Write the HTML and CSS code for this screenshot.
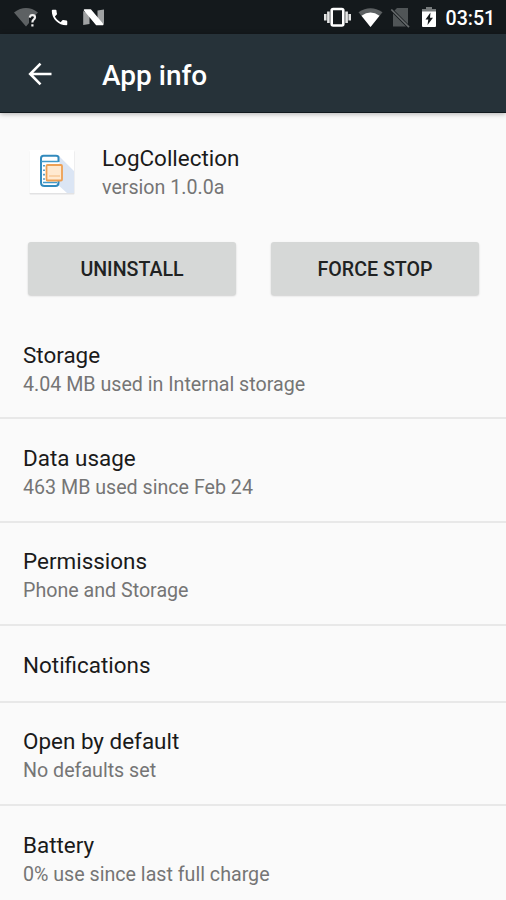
FILE: index.html
```html
<!DOCTYPE html>
<html lang="en">
<head>
<meta charset="utf-8">
<title>App info</title>
<link rel="stylesheet" href="styles.css">
</head>
<body>
<div class="screen">
  <div class="status">
    <svg class="status-icons" width="110" height="34" viewBox="0 0 110 34">
      <path d="M14 12.400Q26 3.600 38 12.400L35.500 15H29V23L26 26.500Z" fill="#5d6163"/>
      <path d="M29.800 17.600Q30 15.200 32.500 15.200Q35 15.200 35 17.300Q35 18.600 33.600 19.600Q32.400 20.500 32.400 22.500M32.400 24.200V26.400" fill="none" stroke="#eee" stroke-width="2.200"/>
      <path transform="translate(49.200 7.200) scale(.86)" d="M6.620 10.790c1.440 2.830 3.760 5.140 6.590 6.590l2.200-2.200c.27-.27.67-.36 1.020-.24 1.120.37 2.330.57 3.570.57.55 0 1 .45 1 1V20c0 .55-.45 1-1 1-9.390 0-17-7.610-17-17 0-.55.45-1 1-1h3.500c.55 0 1 .45 1 1 0 1.250.2 2.450.57 3.570.11.35.03.74-.25 1.020l-2.200 2.200z" fill="#fff"/>
      <path d="M83.200 11L89.500 14V24L83.200 25ZM97.500 10.500L104 9.500V24L97.500 22Z" fill="#a0a2a3"/>
      <path d="M84.500 10H90.500L102.800 24.500H96.500Z" fill="#fff" stroke="#fff" stroke-width="1.500" stroke-linejoin="round"/>
    </svg>
    <div class="status-right">
      <svg width="114" height="34" viewBox="324 0 114 34">
        <rect x="331.700" y="9" width="11.600" height="16.500" rx="1.500" fill="none" stroke="#fff" stroke-width="2.600"/>
        <path d="M328.400 11.500V23M325.300 14V20.500M346.600 11.500V23M349.700 14V20.500" stroke="#e4e5e5" stroke-width="2.600"/>
        <path d="M358.500 12.200Q370.500 4.200 382.500 12.200L370.500 27Z" fill="#5d6163"/>
        <path d="M361.500 15.800Q370.500 9.300 379.500 15.800L370.500 27Z" fill="#fff"/>
        <path d="M397 8H408V24L394.500 10.500ZM393 13.500L406 26.500H393Z" fill="#505557"/>
        <path d="M391.300 9.500L409 27.200" stroke="#666a6c" stroke-width="1.700"/>
        <path d="M426 7H432V9H436V12H422V9H426Z" fill="#777b7c"/>
        <path d="M422 11.500H436V26Q436 27 435 27H423Q422 27 422 26Z" fill="#fff"/>
        <path d="M430.500 12.500L425.500 19.500H428.300L427.500 25L433 17.700H430Z" fill="#14191c"/>
      </svg>
      <span class="clock">03:51</span>
    </div>
  </div>
  <header class="toolbar">
    <svg width="24" height="24" viewBox="0 0 24 24" fill="none" stroke="#fff" stroke-width="2.600"><path d="M23.500 12H3M12.500 1.700L2.200 12L12.500 22.300"/></svg>
    <h1>App info</h1>
  </header>
  <main>
    <section class="app">
      <svg width="54" height="54" viewBox="25 145 54 54">
        <rect x="29.500" y="151" width="45" height="43.500" rx="1" fill="#e2e2e3"/>
        <rect x="29.500" y="150" width="44.500" height="43" fill="#fff"/>
        <path d="M59 156L74 171V193H67L57 184L60 175Z" fill="#dbe5f4"/>
        <path d="M58.500 162V157.500Q58.500 155.800 56 155.800H43.500Q41 155.800 41 158.500V182.500Q41 186 44.500 186H55.500Q58.500 186 58.500 182.500V181" fill="#fff" stroke="#328abd" stroke-width="2"/>
        <path d="M41 161.500H58.500M43 182.500H57" stroke="#429aca" stroke-width="1.300"/>
        <path d="M43 165.800H45M43 170.200H45M43 174.600H45M43 179H45" stroke="#5a9fc6" stroke-width="1.600"/>
        <rect x="46.500" y="165" width="15.500" height="15.500" rx="1" fill="#ffe9d0" stroke="#eea054" stroke-width="1.800"/>
        <path d="M49 176H60" stroke="#f6c18b" stroke-width="1.200"/>
      </svg>
      <div>
        <div class="title">LogCollection</div>
        <div class="summary">version 1.0.0a</div>
      </div>
    </section>
    <div class="actions">
      <button>UNINSTALL</button>
      <button>FORCE STOP</button>
    </div>
    <div class="row"><div class="title">Storage</div><div class="summary">4.04 MB used in Internal storage</div></div>
    <div class="row"><div class="title">Data usage</div><div class="summary">463 MB used since Feb 24</div></div>
    <div class="row"><div class="title">Permissions</div><div class="summary">Phone and Storage</div></div>
    <div class="row single"><div class="title">Notifications</div></div>
    <div class="row"><div class="title">Open by default</div><div class="summary">No defaults set</div></div>
    <div class="row"><div class="title">Battery</div><div class="summary">0% use since last full charge</div></div>
  </main>
</div>
</body>
</html>
```
FILE: styles.css
```css
* { box-sizing: border-box; }
body { margin: 0; font-family: Roboto, sans-serif; background: #fafafa; }
.screen { width: 506px; height: 900px; overflow: hidden; display: flex; flex-direction: column; }
.status { flex: none; height: 34px; background: #14191c; display: flex; justify-content: space-between; }
.status svg { display: block; }
.status-right { display: flex; width: 182px; gap: 7.5px; }
.clock { color: #fff; font-size: 19.6px; font-weight: 500; line-height: 37px; white-space: nowrap; }
.toolbar { flex: none; height: 79px; padding: 1px 28px 0; display: flex; align-items: center; gap: 50px; background: #263239; border-bottom: 1px solid #11191d; box-shadow: 0 1px 5px rgba(0, 0, 0, .3); }
.toolbar h1 { margin: 4px 0 0; color: #fff; font-size: 28px; line-height: 34px; font-weight: 500; }
main { flex: none; }
.app { height: 129px; padding: 32px 25px 0; display: flex; gap: 23px; }
.app .title { line-height: 26px; }
.app .summary { line-height: 33px; }
.title { color: #1a1a1a; font-size: 22.45px; line-height: 28px; white-space: nowrap; }
.summary { color: #757575; font-size: 19.65px; line-height: 31px; white-space: nowrap; }
.actions { height: 74px; padding: 0 27px 0 28px; display: flex; gap: 35px; }
.actions button { flex: 1; height: 53px; padding: 1px 0 0; border: 0; border-radius: 3px; background: #d6d8d7; color: #202222; font: 500 19.6px/54px Roboto, sans-serif; box-shadow: 0 1px 2px rgba(0, 0, 0, .18); }
.row { height: 103.4px; padding: 24.7px 23px 0; border-bottom: 2px solid #e8e8e8; }
.row.single { height: 76.5px; }
```
